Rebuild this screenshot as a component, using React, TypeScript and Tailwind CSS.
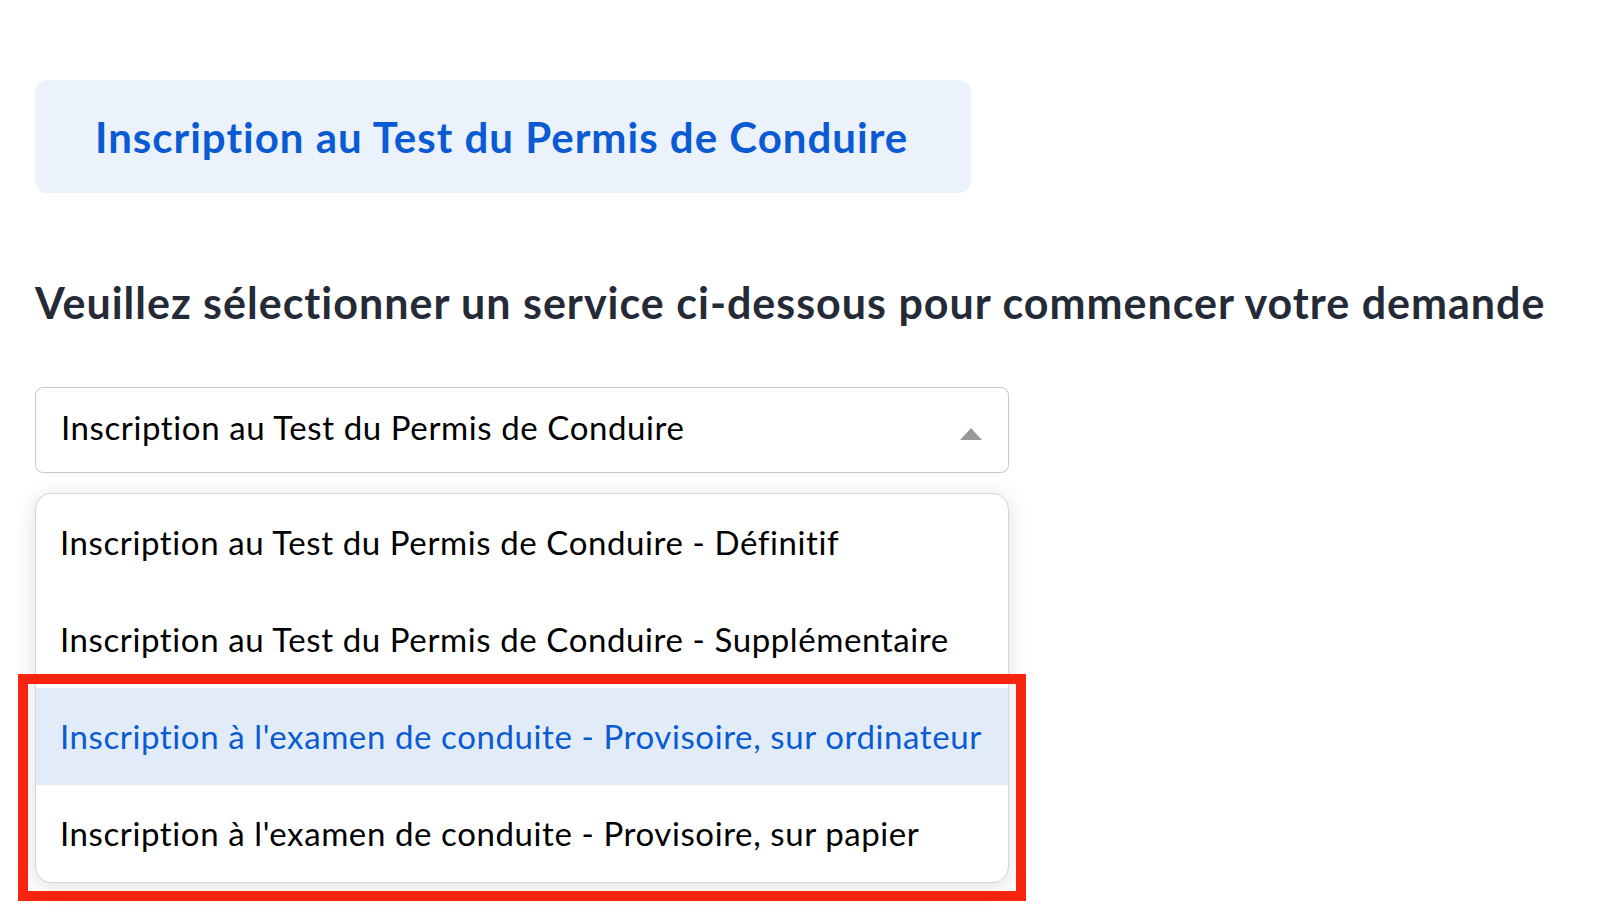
import React from 'react';

const options = [
  'Inscription au Test du Permis de Conduire - Définitif',
  'Inscription au Test du Permis de Conduire - Supplémentaire',
  "Inscription à l'examen de conduite - Provisoire, sur ordinateur",
  "Inscription à l'examen de conduite - Provisoire, sur papier",
];

const App: React.FC = () => {
  const selected = 2;

  return (
    <div className="relative min-h-[912px] w-[1600px] bg-white font-['Lato',sans-serif]">
      <div className="flex flex-col items-start pl-[35px] pt-[80px]">
        {/* page title card */}
        <div className="flex h-[113px] w-[936px] items-center rounded-[12px] bg-[#ebf2fc] pl-[60px]">
          <h1 className="text-[42px] font-bold leading-none tracking-[1px] text-[#0a5bd3]">
            Inscription au Test du Permis de Conduire
          </h1>
        </div>

        <h2 className="mt-[88px] text-[43px] font-bold leading-none tracking-[1px] text-[#252b36]">
          Veuillez sélectionner un service ci-dessous pour commencer votre demande
        </h2>

        {/* select (open) */}
        <div className="mt-[63px] flex h-[86px] w-[974px] items-center justify-between rounded-[8px] border border-[#c8c8c8] bg-white pl-[25px] pr-[26px]">
          <span className="pb-[6px] text-[33px] leading-none tracking-[0.6px] text-black">
            Inscription au Test du Permis de Conduire
          </span>
          <svg width="22" height="12" viewBox="0 0 22 12" className="mt-[8px]">
            <polygon points="11,0 22,12 0,12" fill="#9a9a9a" />
          </svg>
        </div>

        <div className="mt-[20px] w-[974px] overflow-hidden rounded-[16px] border border-[#d4d4d4] bg-white shadow-[0_4px_22px_rgba(0,0,0,0.13)]">
          {options.map((opt, i) => (
            <div
              key={opt}
              className={`flex h-[97px] items-center pl-[24px] text-[33px] leading-none tracking-[0.6px] ${
                i === selected ? 'bg-[#e1ecf8] text-[#0a5bd3]' : 'text-black'
              }`}
            >
              {opt}
            </div>
          ))}
        </div>
      </div>

      {/* red highlight annotation */}
      <div className="pointer-events-none absolute left-[18px] top-[674px] h-[227px] w-[1008px] border-[10px] border-[#f82410]" />
    </div>
  );
};

export default App;
